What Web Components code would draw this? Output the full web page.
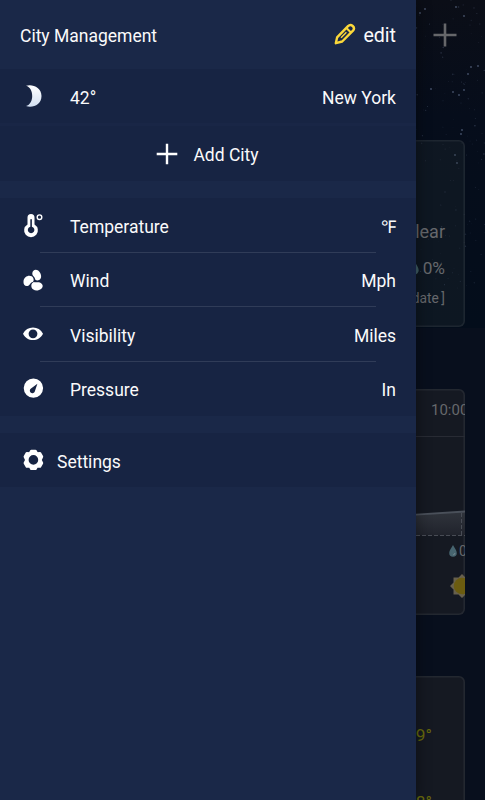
<!DOCTYPE html>
<html lang="en">
<head>
<meta charset="UTF-8">
<title>City Management</title>
<style>
  body {
    margin: 0;
    width: 485px;
    height: 800px;
    overflow: hidden;
    background: #080f1d;
    font-family: Roboto, "Liberation Sans", sans-serif;
    font-size: 17.5px;
    line-height: 22px;
    color: #fafafb;
  }
</style>
</head>
<body>
<weather-app>
  <weather-page></weather-page>
  <side-drawer slot="drawer">
    <drawer-header slot="header" label="City Management" action="edit"></drawer-header>
    <drawer-group class="city">
      <drawer-row icon="moon" label="42°" value="New York"></drawer-row>
      <add-city>Add City</add-city>
    </drawer-group>
    <drawer-group>
      <drawer-row icon="temperature" label="Temperature" value="℉" divider></drawer-row>
      <drawer-row icon="wind" label="Wind" value="Mph" divider></drawer-row>
      <drawer-row icon="visibility" label="Visibility" value="Miles" divider></drawer-row>
      <drawer-row icon="pressure" label="Pressure" value="In"></drawer-row>
    </drawer-group>
    <drawer-group>
      <drawer-row icon="settings" label="Settings" compact></drawer-row>
    </drawer-group>
  </side-drawer>
</weather-app>

<script>
const ICONS = {
  moon: `<defs><linearGradient id="m" x2="0" y2="1"><stop stop-color="#fff"/><stop offset="1" stop-color="#d3e0f2"/></linearGradient></defs>
    <path fill="url(#m)" d="M4 .8C10-1.3 19.5 2 19.5 11S11 23 4 21.1C8.2 19.8 10.2 15.5 10.2 10.9S8.2 2.1 4 .8z"/>`,
  temperature: `<path fill="#fff" fill-rule="evenodd" d="M5.5 4.2a3.5 3.5 0 0 1 7 0v7a6.9 6.9 0 1 1-7 0zM8.3 6.5v7a3.3 3.3 0 1 0 1.6 0v-7a.8.8 0 0 0-1.6 0z" transform="translate(0 -.8)"/>
    <circle cx="17.5" cy="3.2" r="2.3" fill="none" stroke="#fff" stroke-width="1.4"/>`,
  wind: `<g fill="#fff"><path d="M13 9.7C13 7.9 10.1 6.9 10.3 4.2 10.5 1.2 13.5-.5 16.2 1.5c3.5 2.9 4 8.1 1 9.5-2 .8-4 .4-4.2-1.3z"/>
    <path d="M10.7 13c-1.8-.3-2 2.3-4.3 3.7-2.9 1.4-5.3-.9-4.9-4.5C1.9 7.8 6.4 5.6 9.7 7.3c2 1.3 2.8 4.7 1 5.7z"/>
    <path d="M11.8 12.9c1.6 1.1 3.5-.2 6 .5 3 1.1 4 4.2 1.5 6.3-3.2 2.8-8.7 2.1-9.7-1.1-.7-2.2-.2-4.8 2.2-5.7z"/></g>`,
  visibility: `<path fill="#fff" fill-rule="evenodd" d="M1 10.8C3.1 6.6 6.7 4.5 11 4.5s7.9 2.1 10 6.3c-2.1 4.2-5.7 6.3-10 6.3S3.1 15 1 10.8zm10-4.4a4.4 4.4 0 1 0 0 8.8 4.4 4.4 0 0 0 0-8.8z"/>`,
  pressure: `<path fill="#fff" fill-rule="evenodd" d="M11.4 1.4a9.7 9.7 0 1 1 0 19.4 9.7 9.7 0 0 1 0-19.4zM15.4 6.8 9 11.4a2.6 2.6 0 1 0 3.6 3.6z"/>`,
  settings: `<path fill="#fff" stroke="#fff" stroke-width="2.4" stroke-linejoin="round" fill-rule="evenodd" d="M9.3 1.9h4.2l1.4 2.5 3.1-.2 2 3.5-1.5 3.2 1.5 3.2-2 3.5-3.1-.2-1.4 2.5H9.3l-1.4-2.5-3.1.2-2-3.5 1.5-3.2-1.5-3.2 2-3.5 3.1.2zM11.4 4.9a6 6 0 1 0 0 12 6 6 0 0 0 0-12z"/>`
};

class WeatherApp extends HTMLElement {
  constructor() {
    super();
    this.attachShadow({ mode: 'open' }).innerHTML = `
      <style>
        :host { display: block; position: relative; width: 485px; height: 800px; overflow: hidden; }
        .drawer { position: absolute; top: 0; left: 0; bottom: 0; width: 416px; }
      </style>
      <slot></slot>
      <div class="drawer"><slot name="drawer"></slot></div>
    `;
  }
}

class SideDrawer extends HTMLElement {
  constructor() {
    super();
    this.attachShadow({ mode: 'open' }).innerHTML = `
      <style>
        :host { display: block; height: 100%; background: #1a2848; box-shadow: 0 0 14px rgba(0,0,0,.45); }
        .groups { display: flex; flex-direction: column; gap: 17.3px; }
      </style>
      <slot name="header"></slot>
      <div class="groups"><slot></slot></div>
    `;
  }
}

class DrawerHeader extends HTMLElement {
  connectedCallback() {
    this.attachShadow({ mode: 'open' }).innerHTML = `
      <style>
        :host { display: flex; align-items: center; justify-content: space-between; height: 69px; padding: 2px 20px 0; box-sizing: border-box; }
        .edit { display: flex; align-items: center; gap: 7px; font-size: 19.6px; }
        svg { display: block; margin-top: -3px; }
      </style>
      <span class="label">${this.getAttribute('label')}</span>
      <span class="edit">
        <svg width="22" height="22" viewBox="0 0 22 22" fill="none" stroke="#fbd83a" stroke-width="2.4" stroke-linejoin="round">
          <path d="M1.8 20.2 3.1 14.4 14 3.2Q16.3.8 18.7 3T19 7.7L8.2 18.5z"/>
          <path d="m12.4 5 4.8 4.8" stroke-width="2"/>
          <path d="m7 14.8 5.4-5.5" stroke-width="1.4"/>
        </svg>
        <span>${this.getAttribute('action')}</span>
      </span>
    `;
  }
}

class DrawerGroup extends HTMLElement {
  constructor() {
    super();
    this.attachShadow({ mode: 'open' }).innerHTML = `
      <style>
        :host { display: flex; flex-direction: column; background: #172443; }
        :host(.city) { gap: 3px; background: #192646; }
      </style>
      <slot></slot>
    `;
  }
}

class DrawerRow extends HTMLElement {
  connectedCallback() {
    const icon = ICONS[this.getAttribute('icon')] || '';
    this.attachShadow({ mode: 'open' }).innerHTML = `
      <style>
        :host { display: block; height: 54.4px; background: #172443; }
        .row { display: flex; align-items: center; height: 100%; padding: 3px 20px 0 22px; box-sizing: border-box; }
        svg { flex: none; margin: -3px 26px 0 0; }
        .value { margin-left: auto; }
        .line { position: relative; height: 1px; margin: -.4px 40px 0; background: #303c58; }
        :host([compact]) svg { margin-right: 13px; }
      </style>
      <div class="row">
        <svg width="22" height="22" viewBox="0 0 22 22" overflow="visible">${icon}</svg>
        <span>${this.getAttribute('label')}</span>
        <span class="value">${this.getAttribute('value') || ''}</span>
      </div>
      ${this.hasAttribute('divider') ? '<div class="line"></div>' : ''}
    `;
  }
}

class AddCity extends HTMLElement {
  constructor() {
    super();
    this.attachShadow({ mode: 'open' }).innerHTML = `
      <style>
        :host { display: flex; align-items: center; justify-content: center; gap: 15px; height: 54.4px; padding: 3px 1px 0 0; box-sizing: border-box; background: #172443; }
        svg { margin-top: -3px; }
      </style>
      <svg width="22" height="22" viewBox="0 0 22 22" stroke="#fff" stroke-width="2.4"><path d="M11 .7v20.6M.7 11h20.6"/></svg>
      <span><slot></slot></span>
    `;
  }
}

class WeatherPage extends HTMLElement {
  // fixed-seed scatter of stars over the night sky
  stars() {
    let seed = 11;
    const rnd = () => (seed = (seed * 16807) % 2147483647) / 2147483647;
    let out = '';
    for (let i = 0; i < 130; i++) {
      const x = 416 + rnd() * 69;
      const y = rnd() * 290;
      out += `<circle cx="${x.toFixed(1)}" cy="${y.toFixed(1)}" r="${(.3 + rnd() * .5).toFixed(1)}" opacity="${(.1 + rnd() * .2).toFixed(2)}"/>`;
    }
    [[420,13],[425,9],[456,7],[464,16],[471,67],[478,66],[468,74],[453,92],[459,95],[464,90],[431,89],[462,130],[461,134],[455,155],[457,163]].forEach(([x, y]) => {
      out += `<circle cx="${x}" cy="${y}" r=".9" opacity=".5"/>`;
    });
    return out;
  }

  connectedCallback() {
    this.attachShadow({ mode: 'open' }).innerHTML = `
      <style>
        :host { display: block; height: 800px; color: #66686c; background: #080f1d; overflow: hidden; }
        .page { position: relative; display: flex; flex-direction: column; height: 100%; }
        .page > * { flex-shrink: 0; }
        .sky { position: absolute; top: 0; left: 0; background: linear-gradient(180deg, #0b0e17, #060d1b 35%, #030d1b); }
        .bar { position: relative; display: flex; justify-content: flex-end; height: 140px; padding: 23px 28px 0 0; box-sizing: border-box; }
        .card { position: relative; margin: 0 20px; border-radius: 6px; box-shadow: inset 0 0 0 1.6px rgba(120,125,135,.15); background: #151922; box-sizing: border-box; overflow: hidden; }
        .now { height: 187px; padding: 81px 20px 0; background: rgba(50,60,60,.22); display: flex; flex-direction: column; align-items: flex-end; font-size: 18px; }
        .rain { display: flex; align-items: center; gap: 4px; margin-top: 14px; font-size: 17.3px; }
        .update { font-size: 13.8px; margin-top: 8px; word-spacing: -1px; }
        .hourly { height: 226px; margin-top: 62px; }
        .hour { display: flex; justify-content: flex-end; height: 48px; border-bottom: 1px solid #282b34; box-sizing: border-box; font-size: 15px; line-height: 43px; white-space: nowrap; }
        .hour span { width: 34px; }
        .chart { display: block; margin-left: auto; }
        .chance { display: flex; justify-content: flex-end; align-items: center; height: 28px; font-size: 14px; }
        .chance span { width: 6px; margin-left: 2px; white-space: nowrap; }
        .sun { display: block; margin: 9px 0 0 auto; }
        .daily { height: 150px; margin-top: 61px; padding: 48px 33px 0; text-align: right; color: #66680c; font-size: 17.3px; }
        .daily div { margin-bottom: 45px; }
      </style>
      <div class="page">
        <svg class="sky" width="485" height="328" fill="#8091b5">${this.stars()}</svg>
        <div class="bar">
          <svg width="24" height="24" viewBox="0 0 24 24" stroke="#66676a" stroke-width="2.6"><path d="M12 .5v23M.5 12h23"/></svg>
        </div>
        <div class="card now">
          <div>Clear</div>
          <div class="rain">
            <svg width="9" height="14" viewBox="0 0 9 14"><path fill="#3f5e66" d="M4.5 0C6 3.3 8.7 6 8.7 9.3a4.2 4.2 0 0 1-8.4 0C.3 6 3 3.3 4.5 0z"/></svg>
            <span>0%</span>
          </div>
          <div class="update">[ Update ]</div>
        </div>
        <div class="card hourly">
          <div class="hour"><span>10:00</span></div>
          <svg class="chart" width="49" height="100" viewBox="0 0 49 100">
            <defs><linearGradient id="g" x2="0" y2="1"><stop stop-color="#30343c"/><stop offset="1" stop-color="#20232c"/></linearGradient></defs>
            <path fill="url(#g)" d="M0 77.7 49 74.5v24H0z"/>
            <path fill="none" stroke="#4a505a" stroke-width="1.8" d="M0 77.7 49 74.5"/>
            <path fill="none" stroke="#484c55" stroke-dasharray="4 2" d="M0 98.5h49M45.5 76v22"/>
          </svg>
          <div class="chance">
            <svg width="8" height="12" viewBox="0 0 8 12"><path fill="#476570" d="M4 0c1.3 3 3.8 5 3.8 8A3.8 3.8 0 0 1 .2 8C.2 5 2.7 3 4 0z"/><path stroke="#87999e" fill="none" d="M5.9 8.3c-.2.9-.8 1.3-1.5 1.5"/></svg>
            <span>0%</span>
          </div>
          <svg class="sun" width="15" height="24" viewBox="0 0 15 24">
            <path fill="#67604d" d="m12 0 3.5 3.5L20.5 3.5v17h-5L12 24l-3.5-3.5h-5v-5L0 12l3.5-3.5v-5h5z"/>
            <circle cx="12" cy="12" r="8.2" fill="#6b5c10"/>
          </svg>
        </div>
        <div class="card daily"><div>49°</div><div>48°</div></div>
      </div>
    `;
  }
}

customElements.define('weather-app', WeatherApp);
customElements.define('side-drawer', SideDrawer);
customElements.define('drawer-header', DrawerHeader);
customElements.define('drawer-group', DrawerGroup);
customElements.define('drawer-row', DrawerRow);
customElements.define('add-city', AddCity);
customElements.define('weather-page', WeatherPage);
</script>
</body>
</html>
